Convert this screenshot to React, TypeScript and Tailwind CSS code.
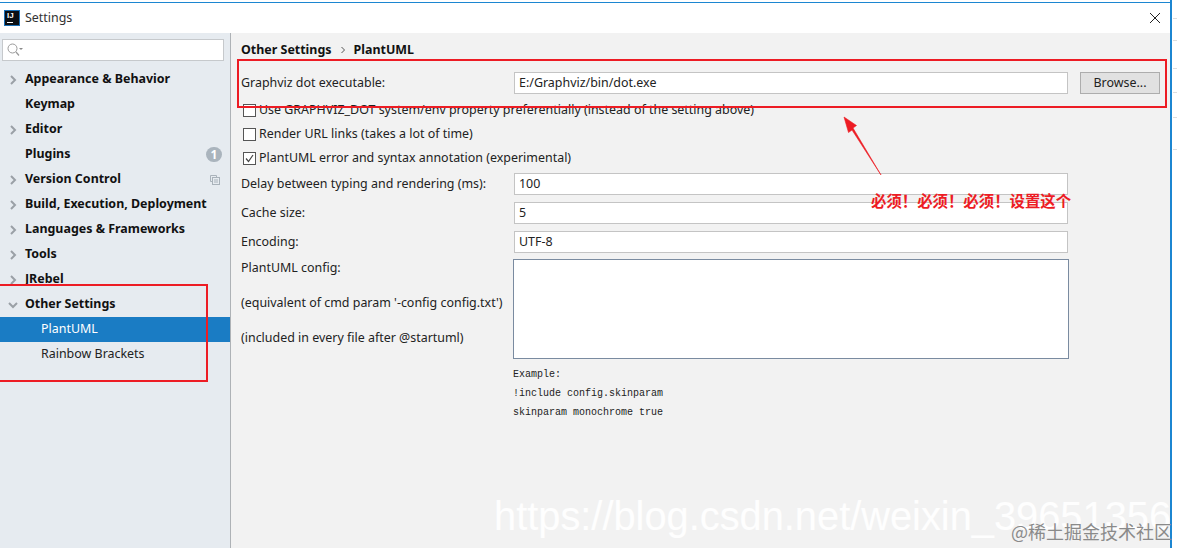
import React from 'react'

const uiFont = "font-['Noto_Sans','Noto_Sans_CJK_SC',sans-serif]"

const Chevron = ({ open }: { open?: boolean }) => (
  <svg width="10" height="10" viewBox="0 0 10 10" className="text-[#9aa0a6]">
    <path d={open ? 'M1 3l4 4 4-4' : 'M3 1l4 4-4 4'} fill="none" stroke="currentColor" strokeWidth="2" />
  </svg>
)

const NavRow = ({ label, arrow, open, right }: any) => (
  <div className="flex items-center h-[25px] pl-[8px] pr-[8px]">
    <div className="w-[17px] shrink-0 flex items-center">{arrow ? <Chevron open={open} /> : null}</div>
    <span className="font-bold text-[12.45px] text-[#111] whitespace-nowrap flex-1">{label}</span>
    {right}
  </div>
)

const SubRow = ({ label, active }: any) => (
  <div className={`flex items-center h-[25px] pl-[41px] text-[12.45px] ${active ? 'bg-[#1a7cc4] text-white' : 'text-[#222]'}`}>
    {label}
  </div>
)

const Field = ({ label, value, mb }: any) => (
  <div className={`flex items-center h-[22px] ${mb}`}>
    <div className="w-[273px] shrink-0 text-[12.45px] text-[#222] whitespace-nowrap">{label}</div>
    <div className="w-[554px] h-[22px] bg-white border border-[#c4c4c4] pl-[4px] flex items-center text-[12.45px] text-[#222]">
      {value}
    </div>
  </div>
)

const Check = ({ label, checked }: any) => (
  <div className="flex items-center h-[24px] pl-[2px] gap-[3px] text-[12.45px] text-[#222] whitespace-nowrap">
    <div className="w-[13px] h-[13px] bg-white border border-[#555] flex items-center justify-center shrink-0">
      {checked ? (
        <svg width="11" height="11" viewBox="0 0 11 11">
          <path d="M2 5.5l2.5 3L9 2" fill="none" stroke="#444" strokeWidth="1.2" />
        </svg>
      ) : null}
    </div>
    <span>{label}</span>
  </div>
)

export default function App() {
  return (
    <div className={`relative w-[1177px] h-[548px] overflow-hidden bg-white ${uiFont}`}>
      {/* window behind the dialog */}
      <div className="flex flex-col h-full pt-[2px] w-[1172px] border-r-2 border-[#1c86d1]">
        <div className="h-[31px] border-t border-[#1c86d1] bg-white flex items-center pl-[4px] shrink-0">
          <div className="w-[16px] h-[16px] bg-[#0b0f14] border border-[#1a6fb5] text-white text-[8px] font-bold leading-[8px] pl-[2px] pt-[1px] shrink-0 font-['Liberation_Sans',sans-serif]">
            IJ
            <div className="w-[6px] h-[1px] bg-white mt-[2px]" />
          </div>
          <span className="ml-[5px] text-[12.45px] text-[#333]">Settings</span>
          <div className="flex-1" />
          <svg width="12" height="12" viewBox="0 0 12 12" className="mr-[9px]">
            <path d="M1 1l10 10M11 1L1 11" stroke="#222" strokeWidth="1" fill="none" />
          </svg>
        </div>

        <div className="flex flex-1 min-h-0">
          <aside className="w-[231px] shrink-0 bg-[#e6ebf0] border-r border-[#aeb2b6] pt-[6px]">
            <div className="ml-[2px] w-[222px] h-[22px] bg-white border border-[#c6c9cc] flex items-center pl-[4px] mb-[6px]">
              <svg width="16" height="14" viewBox="0 0 16 14">
                <circle cx="5.5" cy="5.5" r="4.5" fill="none" stroke="#9a9a9a" strokeWidth="1" />
                <path d="M9 9l3 3.5" stroke="#9a9a9a" strokeWidth="1.2" />
                <path d="M12 5h4l-2 2z" fill="#8a8a8a" />
              </svg>
            </div>
            <NavRow label="Appearance & Behavior" arrow />
            <NavRow label="Keymap" />
            <NavRow label="Editor" arrow />
            <NavRow
              label="Plugins"
              right={
                <div className="w-[16px] h-[15px] rounded-full bg-[#aab4bd] text-white text-[12px] font-bold flex items-center justify-center">
                  1
                </div>
              }
            />
            <NavRow
              label="Version Control"
              arrow
              right={
                <svg width="10" height="10" viewBox="0 0 10 10" className="mr-[2px]">
                  <path d="M0.5 0.5h6v2M0.5 0.5v6h2" fill="none" stroke="#a9b2ba" />
                  <rect x="2.5" y="2.5" width="7" height="7" fill="none" stroke="#a9b2ba" />
                  <path d="M4 5h4M4 7h4" stroke="#a9b2ba" />
                </svg>
              }
            />
            <NavRow label="Build, Execution, Deployment" arrow />
            <NavRow label="Languages & Frameworks" arrow />
            <NavRow label="Tools" arrow />
            <NavRow label="JRebel" arrow />
            <NavRow label="Other Settings" arrow open />
            <SubRow label="PlantUML" active />
            <SubRow label="Rainbow Brackets" />
          </aside>

          <main className="flex-1 bg-[#f2f2f2] pl-[10px] pt-[7px]">
            <div className="flex items-center h-[20px] text-[12.45px] font-bold text-[#111] whitespace-nowrap mb-[12px]">
              Other Settings
              <svg width="8" height="8" viewBox="0 0 8 8" className="mx-[7px]">
                <path d="M2.5 1l3 3-3 3" fill="none" stroke="#555" strokeWidth="1" />
              </svg>
              PlantUML
            </div>

            <div className="flex items-center h-[22px] mb-[4px]">
              <div className="w-[273px] shrink-0 text-[12.45px] text-[#222]">Graphviz dot executable:</div>
              <div className="w-[554px] h-[22px] bg-white border border-[#c4c4c4] pl-[4px] flex items-center text-[12.45px] text-[#222]">
                E:/Graphviz/bin/dot.exe
              </div>
              <div className="ml-[12px] w-[80px] h-[22px] bg-[#e1e1e1] border border-[#adadad] flex items-center justify-center text-[12.45px] text-[#222]">
                Browse...
              </div>
            </div>

            <Check label="Use GRAPHVIZ_DOT system/env property preferentially (instead of the setting above)" />
            <Check label="Render URL links (takes a lot of time)" />
            <Check label="PlantUML error and syntax annotation (experimental)" checked />

            <div className="h-[3px]" />
            <Field label="Delay between typing and rendering (ms):" value="100" mb="mb-[7px]" />
            <Field label="Cache size:" value="5" mb="mb-[7px]" />
            <Field label="Encoding:" value="UTF-8" mb="mb-[6px]" />

            <div className="flex">
              <div className="w-[272px] shrink-0 text-[12.45px] text-[#222] whitespace-nowrap flex flex-col gap-[17px]">
                <div className="h-[18px]">PlantUML config:</div>
                <div className="h-[18px]">(equivalent of cmd param '-config config.txt')</div>
                <div className="h-[18px]">(included in every file after @startuml)</div>
              </div>
              <div className="w-[556px] h-[100px] bg-white border border-[#7a8ba0]" />
            </div>

            <div className="ml-[272px] mt-[6px] font-['Liberation_Mono',monospace] text-[10px] leading-[19px] text-[#222] whitespace-nowrap">
              <div>Example:</div>
              <div>!include config.skinparam</div>
              <div>skinparam monochrome true</div>
            </div>
          </main>
        </div>
      </div>

      {/* slivers of the IDE behind the dialog */}
      <div className="absolute left-[1173px] top-[18px] w-[4px] h-[1px] bg-[#dddddd]" />
      <div className="absolute left-[1173px] top-[40px] w-[4px] h-[1px] bg-[#dddddd]" />
      <div className="absolute left-[1173px] top-[68px] w-[4px] h-[1px] bg-[#dddddd]" />
      <div className="absolute left-[1173px] top-[92px] w-[4px] h-[1px] bg-[#dddddd]" />
      <div className="absolute left-[1173px] top-[117px] w-[4px] h-[1px] bg-[#dddddd]" />
      <div className="absolute left-[1173px] top-[149px] w-[4px] h-[1px] bg-[#dddddd]" />

      {/* red annotations */}
      <div className="absolute left-[237px] top-[59px] w-[930px] h-[49px] border-2 border-[#ed1c24]" />
      <div className="absolute left-[-3px] top-[284px] w-[211px] h-[98px] border-2 border-[#ed1c24]" />
      <svg className="absolute left-[840px] top-[112px]" width="46" height="68" viewBox="0 0 46 68">
        <path d="M41 63L12 18l-3.5 2.5L4 5l12.5 8.5L13 16z" fill="#ed1c24" stroke="#ed1c24" strokeWidth="0.6" />
      </svg>
      <div className="absolute left-[871px] top-[190px] text-[15.4px] leading-[20px] font-bold text-[#ed1c24] whitespace-nowrap font-['Noto_Sans_CJK_SC',sans-serif]">
        必须！必须！必须！设置这个
      </div>

      {/* watermarks */}
      <div className="absolute left-[494px] top-[491px] text-[39.8px] leading-[50px] text-white/90 whitespace-nowrap font-['Liberation_Sans',sans-serif]">
        https://blog.csdn.net/weixin_39651356
      </div>
      <div className="absolute left-[1011px] top-[520px] text-[18px] leading-[22px] text-[#8a8a8a] whitespace-nowrap font-['Noto_Sans_CJK_SC',sans-serif]">
        @稀土掘金技术社区
      </div>
    </div>
  )
}
